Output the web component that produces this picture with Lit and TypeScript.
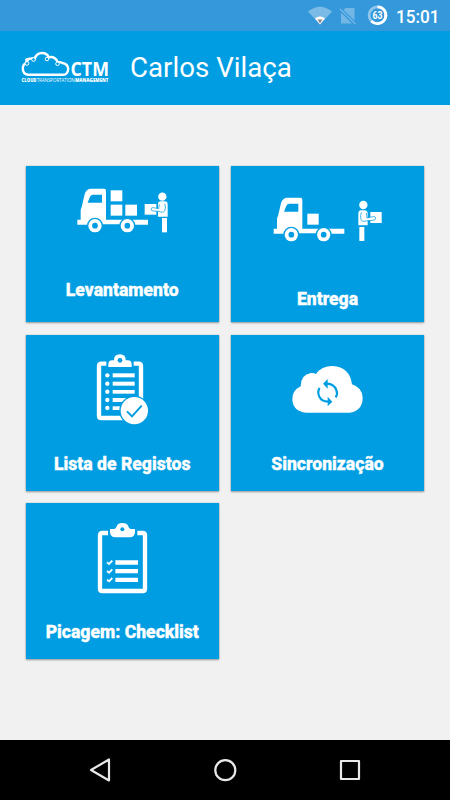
import { LitElement, html, css, svg } from "lit";
import { customElement, property } from "lit/decorators.js";

const truckFront = svg`
  <path fill="#fff" d="M37 134 h10 v-28 q0-5 3-10 l9-38 q4-17 20-17 h38 q6 0 6 6 v87 h126 v15 h-43 a21 21 0 0 0-39-1 h-57 a21 21 0 0 0-40 1 h-33 z"/>
  <path fill="#009de2" d="M68 83 L75 65 Q78 59 84 59 H111 V83 Z"/>
  <circle cx="90" cy="152" r="24" fill="#009de2"/><circle cx="90" cy="152" r="20" fill="#fff"/><circle cx="90" cy="152" r="8.5" fill="#009de2"/>
  <circle cx="187" cy="152" r="24" fill="#009de2"/><circle cx="187" cy="152" r="20" fill="#fff"/><circle cx="187" cy="152" r="8.5" fill="#009de2"/>`;

const pickup = svg`<svg class="pickup" viewBox="0 0 345 210" width="115" height="70">
  ${truckFront}
  <g fill="#fff"><rect x="137" y="46" width="35" height="33"/><rect x="137" y="89" width="35" height="33"/><rect x="181" y="89" width="35" height="33"/>
  <rect x="239" y="87" width="35" height="32"/><circle cx="292" cy="65" r="12.5"/>
  <path d="M286 79 h13 q9 0 9 10 v36 h-29 v-40 q2-6 7-6z"/><rect x="291" y="129" width="15" height="43"/></g>
  <path d="M299 86 q5 9 0 22 q-3 6-12 3 l-6-2 -17-1 q-6-1-6-6 q1-5 7-4 l16 3 2-13" fill="#fff" stroke="#009de2" stroke-width="2.2"/>
</svg>`;

const delivery = svg`<svg class="delivery" viewBox="0 0 375 195" width="125" height="65">
  <g transform="translate(-11 -3)">${truckFront}</g>
  <g fill="#fff"><rect x="127" y="86" width="34" height="33"/><rect x="316" y="81" width="34" height="33"/><circle cx="295" cy="60" r="12.5"/>
  <path d="M286 76 h14 q6 1 8 7 v38 h-28 v-37 q1-7 6-8z"/><rect x="283" y="126" width="15" height="42"/></g>
  <path d="M289 82 q-4 9-1 22 q3 7 11 5 l8-2 17-1 q8-1 8-7 q-1-6-8-4 l-18 4 -2-15" fill="#fff" stroke="#009de2" stroke-width="2.2"/>
</svg>`;

const records = svg`<svg class="records" viewBox="0 0 225 270" width="75" height="90">
  <path d="M64 56 H49 Q42 56 42 63 V212 Q42 219 49 219 H162 Q168 219 168 212 V63 Q168 56 161 56 H146" fill="none" stroke="#fff" stroke-width="13"/>
  <path d="M70 66 V58 Q70 46 82 46 H87 Q86 28 105 28 Q123 28 122 46 H128 Q140 46 140 58 V66 Z" fill="#fff"/>
  <circle cx="105" cy="46" r="7" fill="#009de2"/>
  <g fill="#fff"><circle cx="67" cy="91" r="6.5"/><circle cx="67" cy="116" r="6.5"/><circle cx="67" cy="140" r="6.5"/><circle cx="67" cy="165" r="6.5"/><circle cx="67" cy="189" r="6.5"/>
  <rect x="83" y="85" width="66" height="12"/><rect x="83" y="110" width="66" height="12"/><rect x="83" y="135" width="66" height="11"/><rect x="83" y="159" width="40" height="12"/><rect x="83" y="184" width="35" height="11"/></g>
  <circle cx="148" cy="197" r="45" fill="#009de2"/><circle cx="148" cy="197" r="41" fill="#fff"/>
  <path d="M126 199 L141 214 L170 182" fill="none" stroke="#009de2" stroke-width="6"/>
</svg>`;

const sync = svg`<svg class="sync" viewBox="0 0 285 210" width="95" height="70">
  <path d="M78 173 Q39 168 37 134 Q36 107 62 94 Q62 59 93 54 Q101 53 108 57 Q124 33 158 33 Q209 36 216 88 Q247 98 248 128 Q248 166 210 173 Z" fill="#fff"/>
  <g fill="none" stroke="#009de2" stroke-width="6.5"><path d="M141 86 Q162 87 169 105 Q174 116 167 127"/><path d="M119 99 Q111 110 118 125 Q125 139 144 140"/></g>
  <path d="M143 72 V101 L129 86 Z M143 125 V154 L157 140 Z" fill="#009de2"/>
</svg>`;

const checklist = svg`<svg class="checklist" viewBox="0 0 225 270" width="75" height="90">
  <path d="M69 54 H52 Q45 54 45 61 V221 Q45 228 52 228 H173 Q180 228 180 221 V61 Q180 54 173 54 H157" fill="none" stroke="#fff" stroke-width="13"/>
  <path d="M75 42 H88 Q94 41 95 34 Q99 24 112 24 Q126 24 130 34 Q131 41 137 42 H150 V52 Q149 67 134 67 H91 Q76 67 75 52 Z" fill="#fff"/>
  <circle cx="112" cy="43" r="6" fill="#009de2"/>
  <path d="M91 136 h68 v13 h-68z M91 162 h68 v13 h-68z M91 188 h68 v13 h-68z" fill="#fff"/>
  <path d="M66 142 l6 5 10-10 M66 168 l6 5 10-10 M66 194 l6 5 10-10" fill="none" stroke="#fff" stroke-width="5.5"/>
</svg>`;

@customElement("menu-tile")
class MenuTile extends LitElement {
  @property() label = "";
  @property({ attribute: false }) icon: unknown;
  static styles = css`
    :host { display: flex; flex-direction: column; align-items: flex-start; background: #009de2;
      box-shadow: 0 1px 2px rgba(0,0,0,.36), 0 0 1px rgba(0,0,0,.25); box-sizing: border-box; }
    svg { display: block; flex: none; }
    .pickup { margin: 9px 0 34px 39px; }
    .delivery { margin: 19px 0 38px 33.5px; }
    .records { margin: 10px 0 18px 59px; }
    .sync { margin: 20px 0 28px 48.5px; }
    .checklist { margin: 11.8px 0 16.2px 59px; }
    .label { align-self: stretch; text-align: center; color: #fff; font: 800 17.6px/22px Roboto, sans-serif; white-space: nowrap; -webkit-text-stroke: .4px #fff; }
  `;
  render() { return html`${this.icon}<div class="label">${this.label}</div>`; }
}

@customElement("app-root")
class AppRoot extends LitElement {
  static styles = css`
    :host { display: flex; flex-direction: column; width: 450px; height: 800px; background: #f1f1f1; font-family: Roboto, sans-serif; overflow: hidden; }
    svg { display: block; }
    .status { height: 31px; background: #3498db; display: flex; justify-content: flex-end; }
    .bar { height: 74px; background: #009de2; display: flex; align-items: center; flex: none; }
    .title { margin: 0 0 0 -20px; color: #fff; font-size: 27.7px; line-height: 36px; white-space: nowrap; font-weight: 400; }
    .tiles { flex: 1; display: grid; grid-template-columns: 192.5px 192.5px; grid-auto-rows: 156px; gap: 12.6px 12.75px; padding: 61px 0 0 26px; align-content: start; }
    .nav { height: 60px; background: #000; flex: none; }
    text { font-family: Roboto, sans-serif; fill: #fff; }
    .logo text { font-family: "Open Sans", sans-serif; }
  `;
  render() {
    return html`
      <div class="status">
        <svg width="160" height="31" viewBox="290 0 160 31">
          <path d="M308 11.5 Q320 2 332 11.5 L320 24.5 Z" fill="#7bbbe8"/>
          <path d="M315 18.6 Q320 14.5 325 18.6 L320 24.5 Z" fill="#fff"/>
          <path d="M317.5 19.5 h5 l-2.5 4z" fill="#888"/>
          <path d="M345.5 8 H354.5 V20.5 L343.5 10 Z M341 12.5 V23.5 H352 Z" fill="#73b7e6"/>
          <path d="M340 9 L355.5 24" stroke="#73b7e6" stroke-width="1.4"/>
          <circle cx="377.5" cy="15.2" r="8.4" fill="none" stroke="#91c7ed" stroke-width="2.8"/>
          <path d="M377.5 6.8 A8.4 8.4 0 1 1 371.4 21" fill="none" stroke="#fff" stroke-width="2.8"/>
          <text x="377.5" y="18.9" text-anchor="middle" font-size="10" font-weight="700" textLength="10" lengthAdjust="spacingAndGlyphs">63</text>
          <text x="396" y="22.6" font-size="18" font-weight="500" textLength="43.5" lengthAdjust="spacingAndGlyphs">15:01</text>
        </svg>
      </div>
      <div class="bar">
        <svg class="logo" width="150" height="74" viewBox="0 31 150 74">
          <path d="M28 74.8 Q22.8 74 22.8 68.5 Q22.8 64 26.5 62.8 Q26.5 58.7 31 58.5 Q33.5 58.3 34.5 59 Q36.5 53 42 53 Q47 53 48.8 57.3 Q55 56 57.8 62.3 Q60 61.8 62.5 63 Q68 64 68.2 69 Q67.8 74.8 63 74.8 Z" fill="none" stroke="#fff" stroke-width="2.4"/>
          <g fill="#009de2" stroke="#fff" stroke-width="1"><circle cx="27" cy="63.5" r="1.8"/><circle cx="33.5" cy="59.5" r="1.8"/><circle cx="47" cy="59" r="1.8"/><circle cx="57.5" cy="63.8" r="1.8"/></g>
          <circle cx="27" cy="60" r="1.9" fill="#fff"/>
          <text x="70.5" y="76" font-size="19" font-weight="700" textLength="38.5" lengthAdjust="spacingAndGlyphs">CTM</text>
          <g font-size="4.7">
            <text x="21.5" y="82.2" font-weight="800" textLength="15" lengthAdjust="spacingAndGlyphs">CLOUD</text>
            <text x="36.7" y="82.2" font-weight="400" textLength="38" lengthAdjust="spacingAndGlyphs">TRANSPORTATION</text>
            <text x="75" y="82.2" font-weight="800" textLength="33.5" lengthAdjust="spacingAndGlyphs">MANAGEMENT</text>
          </g>
        </svg>
        <div class="title">Carlos Vilaça</div>
      </div>
      <div class="tiles">
        <menu-tile label="Levantamento" .icon=${pickup}></menu-tile>
        <menu-tile label="Entrega" .icon=${delivery}></menu-tile>
        <menu-tile label="Lista de Registos" .icon=${records}></menu-tile>
        <menu-tile label="Sincronização" .icon=${sync}></menu-tile>
        <menu-tile label="Picagem: Checklist" .icon=${checklist}></menu-tile>
      </div>
      <div class="nav">
        <svg width="450" height="60" viewBox="0 740 450 60" fill="none" stroke="#e8e8e8" stroke-width="2.2" stroke-linejoin="round">
          <path d="M109 759.5 V780.5 L91 770 Z"/><circle cx="225.3" cy="770.2" r="10"/><rect x="341" y="761" width="18" height="18"/>
        </svg>
      </div>`;
  }
}
